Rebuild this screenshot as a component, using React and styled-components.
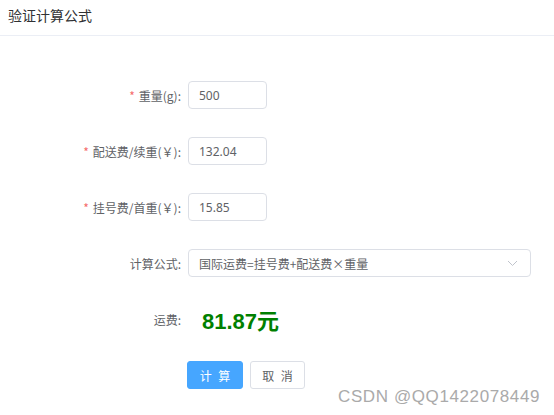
import styled, { createGlobalStyle } from "styled-components"

const GlobalStyle = createGlobalStyle`
	body {
		margin: 0;
		background: #fff;
		font-family: "Noto Sans CJK SC", "Noto Sans", sans-serif;
	}
`

function ChevronDown() {
	return (
		<svg width="11" height="7" viewBox="0 0 11 7">
			<path d="M1 1 L5.5 5.5 L10 1" fill="none" stroke="#c0c4cc" strokeWidth="1" />
		</svg>
	)
}

const rows = [
	{ label: "重量(g)", value: "500", required: true },
	{ label: "配送费/续重(￥)", value: "132.04", required: true },
	{ label: "挂号费/首重(￥)", value: "15.85", required: true },
]

function App() {
	return (
		<Page>
			<GlobalStyle />
			<Header>验证计算公式</Header>
			<Form>
				{rows.map((r) => (
					<Row key={r.label}>
						<Label>
							{r.required && <Star>*</Star>}
							{r.label}:
						</Label>
						<Input defaultValue={r.value} />
					</Row>
				))}
				<Row>
					<Label>计算公式:</Label>
					<Select>
						<span>国际运费=挂号费+配送费×重量</span>
						<ChevronDown />
					</Select>
				</Row>
				<Row>
					<Label>运费:</Label>
					<Result>81.87元</Result>
				</Row>
				<Row>
					<Label />
					<Buttons>
						<Button $primary>计 算</Button>
						<Button>取 消</Button>
					</Buttons>
				</Row>
			</Form>
			<Watermark>CSDN @QQ1422078449</Watermark>
		</Page>
	)
}

export default App

const Page = styled.div`
	position: relative;
	width: 554px;
	height: 415px;
	overflow: hidden;
`

const Header = styled.div`
	height: 36px;
	box-sizing: border-box;
	padding: 5px 0 0 8px;
	border-bottom: 1px solid #ebeef5;
	font-size: 14px;
	color: #303133;
`

const Form = styled.div`
	padding-top: 45px;
	display: flex;
	flex-direction: column;
	gap: 28px;
`

const Row = styled.div`
	display: flex;
	align-items: center;
	height: 28px;
`

const Label = styled.div`
	width: 188px;
	box-sizing: border-box;
	padding-right: 7px;
	text-align: right;
	font-size: 12px;
	color: #606266;
`

const Star = styled.span`
	color: #f56c6c;
	margin-right: 4px;
`

const Input = styled.input`
	width: 79px;
	height: 28px;
	box-sizing: border-box;
	border: 1px solid #dcdfe6;
	border-radius: 4px;
	padding: 0 10px;
	font-family: "Noto Sans", sans-serif;
	font-size: 12px;
	color: #606266;
	outline: none;
`

const Select = styled.div`
	width: 343px;
	height: 28px;
	box-sizing: border-box;
	border: 1px solid #dcdfe6;
	border-radius: 4px;
	padding: 0 12px 0 10px;
	display: flex;
	align-items: center;
	justify-content: space-between;
	font-size: 12px;
	color: #606266;
`

const Result = styled.div`
	margin-left: 14px;
	font-family: "Liberation Sans", Arial, "Noto Sans CJK SC", sans-serif;
	font-weight: bold;
	font-size: 22px;
	color: #008000;
`

const Buttons = styled.div`
	display: flex;
	gap: 7px;
	margin-left: -1px;
`

const Button = styled.button`
	width: ${(p) => (p.$primary ? "56px" : "55px")};
	height: 28px;
	border-radius: 3px;
	font-family: "Noto Sans CJK SC", sans-serif;
	font-size: 12px;
	letter-spacing: 2px;
	border: 1px solid ${(p) => (p.$primary ? "#46a6ff" : "#dcdfe6")};
	background: ${(p) => (p.$primary ? "#46a6ff" : "#fff")};
	color: ${(p) => (p.$primary ? "#fff" : "#606266")};
	padding: 0 0 0 2px;
`

const Watermark = styled.div`
	position: absolute;
	right: 14px;
	bottom: 8px;
	font-family: "Liberation Sans", Arial, sans-serif;
	font-size: 17px;
	color: #aaa;
	letter-spacing: 0.6px;
`
